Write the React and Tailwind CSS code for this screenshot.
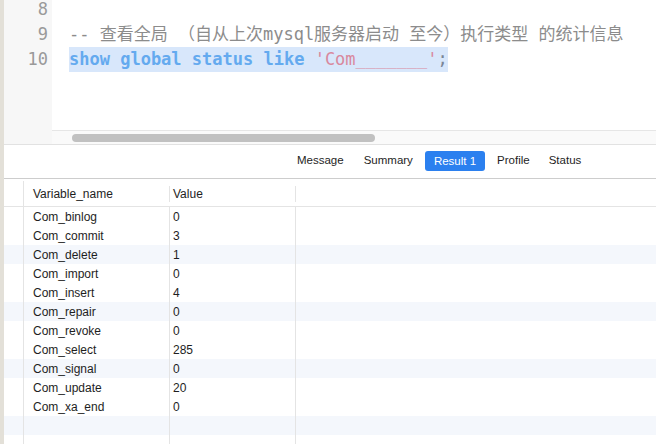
import React from "react"

const rows = [
  ["Com_binlog", "0"],
  ["Com_commit", "3"],
  ["Com_delete", "1"],
  ["Com_import", "0"],
  ["Com_insert", "4"],
  ["Com_repair", "0"],
  ["Com_revoke", "0"],
  ["Com_select", "285"],
  ["Com_signal", "0"],
  ["Com_update", "20"],
  ["Com_xa_end", "0"],
  ["", ""],
  ["", ""],
]

const mono = { fontFamily: '"DejaVu Sans Mono", "Noto Sans CJK SC", monospace' }
const ui = { fontFamily: '"Liberation Sans", Arial, sans-serif' }

export default function App() {
  return (
    <div className="flex h-[444px] w-[656px] overflow-hidden bg-white">
      <div className="w-[4px] shrink-0 bg-[#e3e0d8]" />
      <div className="flex min-w-0 flex-1 flex-col">
        {/* editor */}
        <div className="flex h-[145px] shrink-0 border-b border-[#e2e2e2]">
          <div
            className="w-[48px] shrink-0 bg-[#f7f7f7] pr-[4px] text-right text-[17px] leading-[25px] text-[#9a9a9a]"
            style={mono}
          >
            <div className="-mt-[3px]">
              <div>8</div>
              <div>9</div>
              <div>10</div>
            </div>
          </div>
          <div className="flex min-w-0 flex-1 flex-col">
            <div className="flex-1 pl-[17px] text-[17px] leading-[25px] whitespace-nowrap" style={mono}>
              <div className="-mt-[3px]">
                <div>&nbsp;</div>
                <div className="text-[#8c8c8c]">-- 查看全局 （自从上次mysql服务器启动 至今）执行类型 的统计信息</div>
                <div className="inline-block bg-[#d8e7fb]">
                  <span className="font-bold text-[#64aaef]">show global status like </span>
                  <span className="text-[#d9899e]">'Com_______'</span>
                  <span className="text-[#7a8596]">;</span>
                </div>
              </div>
            </div>
            <div className="flex h-[14px] items-center border-t border-[#e6e6e6] bg-[#fafafa] pl-[20px]">
              <div className="h-[8px] w-[303px] rounded-full bg-[#c1c1c1]" />
            </div>
          </div>
        </div>

        {/* tab bar */}
        <div
          className="flex h-[34px] shrink-0 items-center border-b border-[#cdcdcd] pb-[2px] pl-[293px] text-[11.5px] text-[#1e1e1e]"
          style={ui}
        >
          <span>Message</span>
          <span className="ml-[20px]">Summary</span>
          <span className="ml-[12px] rounded-[3px] bg-[#2b80ef] px-[9px] py-[3px] leading-[14px] text-white">Result 1</span>
          <span className="ml-[12px]">Profile</span>
          <span className="ml-[19px]">Status</span>
        </div>

        {/* result table */}
        <div className="flex-1 text-[12px] text-[#1e1e1e]" style={ui}>
          <div className="flex h-[28px] items-center border-b border-[#e4e4e4] pt-[2px]">
            <div className="h-full w-[20px] shrink-0 border-r border-[#e4e4e4]" />
            <div className="flex h-[16px] w-[146px] shrink-0 items-center border-r border-[#e4e4e4] pl-[9px]">
              Variable_name
            </div>
            <div className="flex h-[16px] w-[126px] shrink-0 items-center border-r border-[#e4e4e4] pl-[3px]">
              Value
            </div>
          </div>
          {rows.map((r, i) => (
            <div key={i} className={`flex h-[19px] items-center ${i % 3 === 2 ? "bg-[#f4f7fc]" : ""}`}>
              <div className="h-full w-[20px] shrink-0 border-r border-[#e4e4e4]" />
              <div className="flex h-full w-[146px] shrink-0 items-center border-r border-[#e4e4e4] pl-[9px]">
                {r[0]}
              </div>
              <div className="flex h-full w-[126px] shrink-0 items-center border-r border-[#e4e4e4] pl-[3px]">
                {r[1]}
              </div>
            </div>
          ))}
        </div>
      </div>
    </div>
  )
}
